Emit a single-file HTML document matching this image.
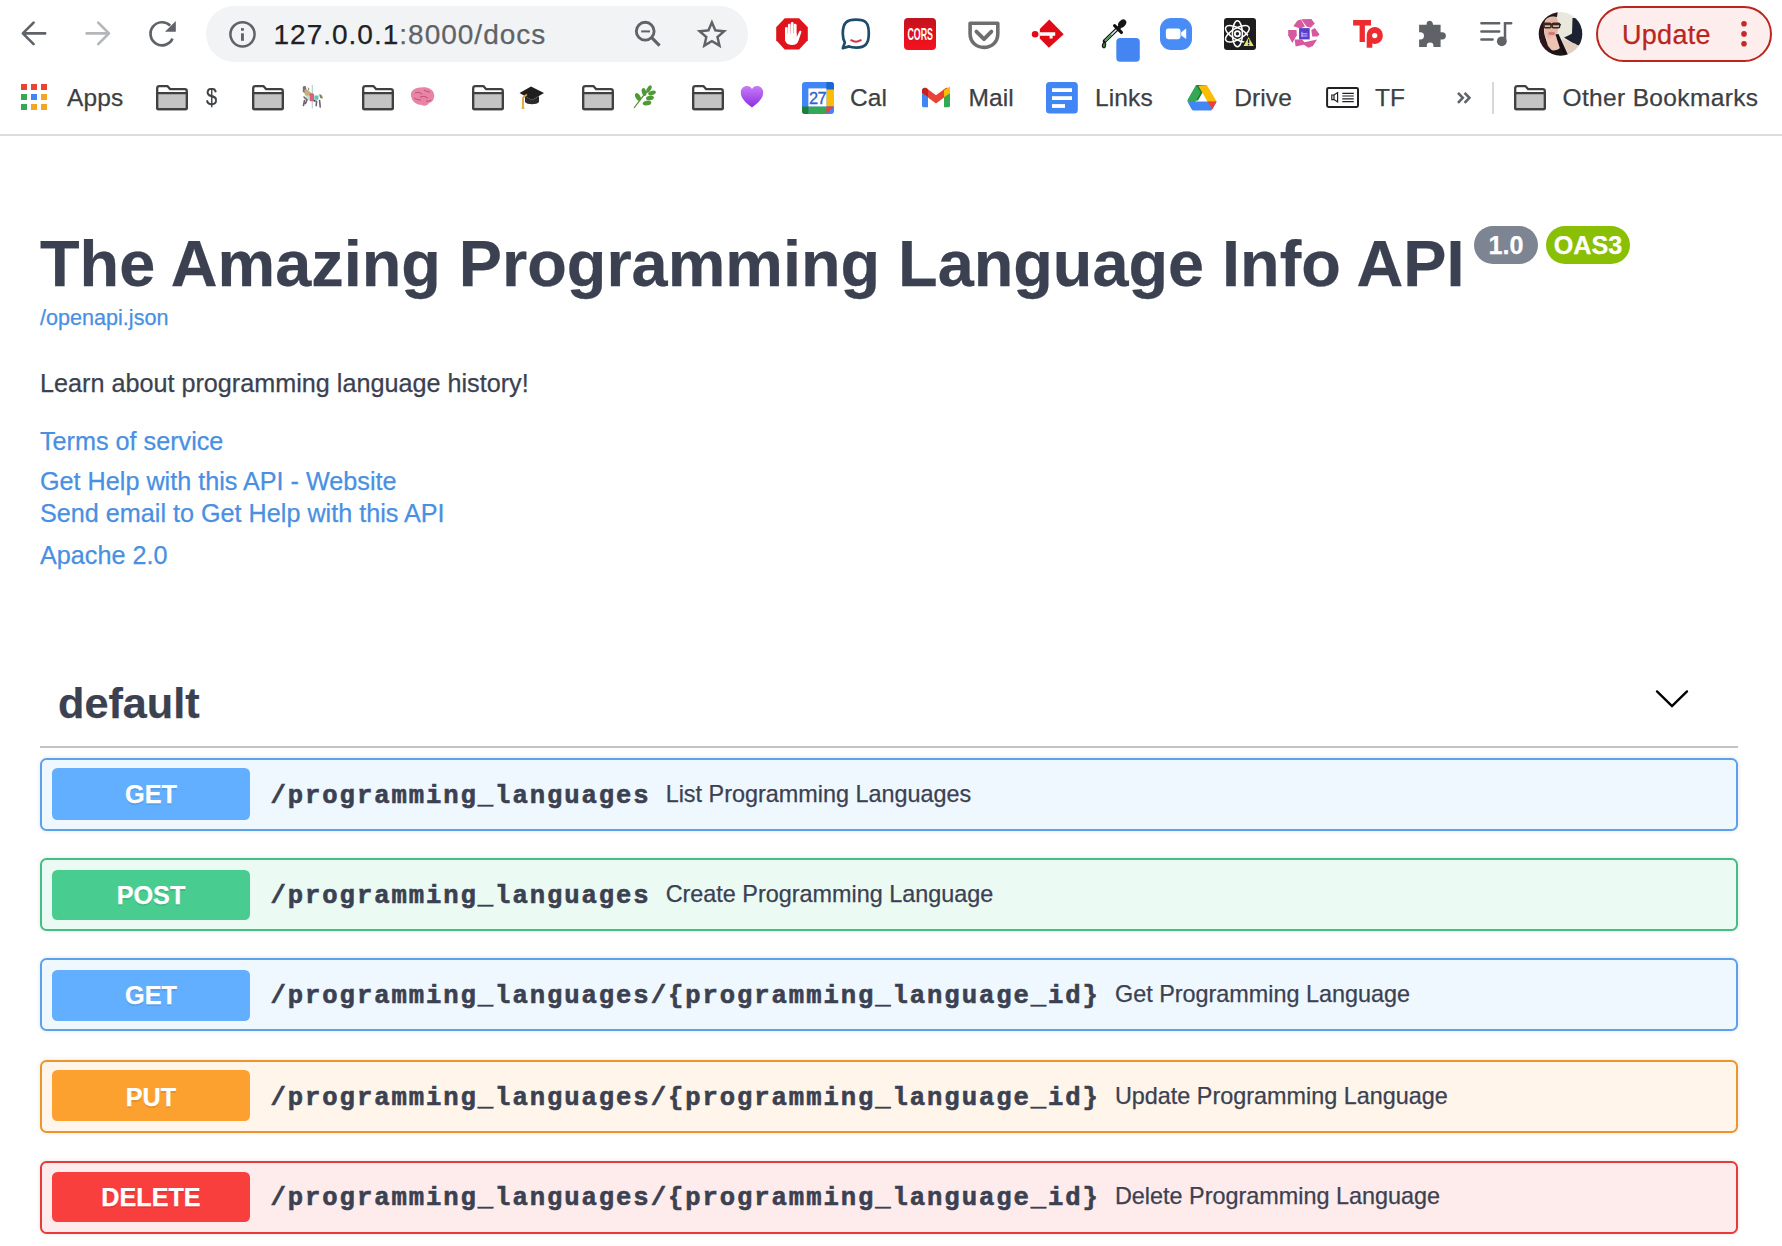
<!DOCTYPE html><html><head><meta charset="utf-8"><style>
html,body{margin:0;padding:0;background:#fff;width:1782px;height:1246px;overflow:hidden;position:relative}
.t{position:absolute;white-space:nowrap;-webkit-text-stroke:0.25px currentColor}
.i{position:absolute;overflow:visible}
.b{position:absolute;box-sizing:border-box}
</style></head><body>
<div class="b" style="left:0;top:0;width:1782px;height:134px;background:#fff"></div>
<div class="b" style="left:0;top:134px;width:1782px;height:2px;background:#dadce0"></div>
<svg class="i" style="left:0px;top:0px;" width="200" height="66" viewBox="0 0 200 66">
<g fill="none" stroke="#5f6368" stroke-width="2.6" stroke-linecap="round" stroke-linejoin="round">
<path d="M45.2 33.4H23M33.6 22.6L22.8 33.4L33.6 44.2"/></g>
<g fill="none" stroke="#b4b6b9" stroke-width="2.6" stroke-linecap="round" stroke-linejoin="round">
<path d="M86.6 33.4H108.8M98.2 22.6L109 33.4L98.2 44.2"/></g>
<g fill="none" stroke="#5f6368" stroke-width="2.7" stroke-linecap="butt">
<path d="M172.52 38.68A11.55 11.55 0 1 1 170.2 25.6"/></g>
<path fill="#5f6368" d="M175.8 20.9V31.7H165Z"/>
</svg>
<div class="b" style="left:206px;top:6px;width:542px;height:56px;border-radius:28px;background:#f1f3f4"></div>
<svg class="i" style="left:200px;top:0px;" width="80" height="66" viewBox="200 0 80 66">
<circle cx="242.5" cy="34.3" r="12.1" fill="none" stroke="#5f6368" stroke-width="2.5"/>
<rect x="241" y="33.3" width="2.9" height="7.5" fill="#5f6368"/>
<rect x="241" y="28.1" width="2.9" height="2.6" fill="#5f6368"/>
</svg>
<div class="t" style="left:273.5px;top:20.60px;font-size:28px;line-height:28px;color:#202124;font-weight:normal;font-family:'Liberation Sans', sans-serif;letter-spacing:1.0px;">127.0.0.1<span style="color:#5f6368">:8000/docs</span></div>
<svg class="i" style="left:620px;top:0px;" width="130" height="66" viewBox="620 0 130 66">
<g fill="none" stroke="#5f6368">
<circle cx="645.2" cy="31.2" r="8.9" stroke-width="2.9"/><path d="M651.4 37.4L659.6 45.6" stroke-width="3.1"/><path d="M641.2 31.4H650" stroke-width="2"/></g>
<path fill="#5f6368" transform="translate(693.6 16.15) scale(1.525)" d="M22 9.24l-7.19-.62L12 2 9.19 8.63 2 9.24l5.46 4.73L5.82 21 12 17.27 18.18 21l-1.63-7.03L22 9.24zM12 15.4l-3.76 2.27 1-4.28-3.32-2.88 4.38-.38L12 6.1l1.71 4.04 4.38.38-3.32 2.88 1 4.28L12 15.4z"/>
</svg>
<svg class="i" style="left:776px;top:18px;" width="32" height="32" viewBox="0 0 32 32">
<path fill="#e0141c" d="M8.7 0.3H23.1L31.8 9.3V22.3L23.1 31.5H8.7L0.2 22.3V9.3Z"/>
<g fill="#fff">
<rect x="9" y="9" width="2.7" height="14" rx="1.3"/>
<rect x="11.9" y="5.8" width="2.7" height="14" rx="1.3"/>
<rect x="14.8" y="4.1" width="2.8" height="14" rx="1.4"/>
<rect x="17.8" y="5.8" width="2.8" height="14" rx="1.4"/>
<path d="M9 15.5H20.6V19.6L23.2 13.6C23.8 12.4 25.6 12.6 25.4 14L22.6 22.4C21.6 25.6 19.4 27 16 27C11.4 27 9 24.6 9 20.6Z"/>
</g>
</svg>
<svg class="i" style="left:840px;top:17px;" width="34" height="34" viewBox="0 0 34 34">
<path fill="none" stroke="#1e4c6d" stroke-width="2.7" stroke-linejoin="round" d="M16 2.6C25.4 2.6 28.8 5.4 28.8 16.4C28.8 27 25 30.6 16.4 30.6C12.6 30.6 10.6 30.2 9 29.4L2.8 31.2L4.8 25.6C3.4 23 2.8 20 2.8 16.4C2.8 5.6 6.8 2.6 16 2.6Z"/>
<path fill="none" stroke="#d3344c" stroke-width="2" stroke-linecap="round" d="M11.2 23.2Q16 26.4 20.8 23.2"/>
</svg>
<div class="b" style="left:904px;top:18px;width:32px;height:31.5px;border-radius:4px;background:linear-gradient(#bf1420,#d8101c 30%,#e3101c 55%,#f5121f)"></div>
<svg class="i" style="left:904px;top:18px;" width="32" height="32" viewBox="0 0 32 32"><text x="3.4" y="21.5" font-family="Liberation Sans" font-weight="bold" font-size="16.6" fill="#fff" textLength="25.6" lengthAdjust="spacingAndGlyphs">CORS</text></svg>
<svg class="i" style="left:966px;top:19px;" width="36" height="32" viewBox="0 0 36 32">
<path fill="none" stroke="#6e6e6e" stroke-width="3.6" stroke-linejoin="round" d="M4.1 4.2H31.8V14.8C31.8 23.2 25.6 28.4 18 28.4C10.4 28.4 4.1 23.2 4.1 14.8Z"/>
<path fill="none" stroke="#6e6e6e" stroke-width="3.8" stroke-linecap="round" stroke-linejoin="round" d="M10.4 12.6L18 20.2L25.4 12.6"/>
</svg>
<svg class="i" style="left:1030px;top:17px;" width="36" height="34" viewBox="0 0 36 34">
<path fill="#e10a16" d="M19.3 2.4L33.7 17.2L18.9 30.7L9.8 21.6V12Z"/>
<circle cx="5.1" cy="17.2" r="3.3" fill="#e10a16"/>
<path fill="#fff" d="M9.8 15.3H25.2V18.8H22.6V21.6H19.6V18.8H9.8Z"/>
</svg>
<svg class="i" style="left:1096px;top:14px;" width="48" height="50" viewBox="0 0 48 50">
<path d="M8.6 27.2L21.6 14.6" stroke="#111" stroke-width="3.8" stroke-linecap="round"/>
<path d="M9 26.8L21.2 15" stroke="#dfe8df" stroke-width="1.6"/>
<path d="M9.2 26.6L15.5 20.6" stroke="#3f9a4a" stroke-width="1.6"/>
<path d="M18.6 11.6L25.4 18.4" stroke="#111" stroke-width="3.2" stroke-linecap="round"/>
<ellipse cx="26.2" cy="9.6" rx="4.6" ry="3.4" transform="rotate(-45 26.2 9.6)" fill="#161616"/>
<path d="M21.6 12.6L24.2 15.2" stroke="#161616" stroke-width="4"/>
<path d="M8 28.2C6.2 30.4 5.6 32.6 7.2 33.6C8.8 34.4 10.2 32.6 9.6 29Z" fill="#3f7a46" stroke="#111" stroke-width="1.1"/>
<rect x="20.3" y="23.9" width="23.5" height="23.9" rx="3.8" fill="#4585f2"/>
</svg>
<div class="b" style="left:1160px;top:18px;width:32px;height:32px;border-radius:11px;background:#4a8cf6"></div>
<svg class="i" style="left:1160px;top:18px;" width="32" height="32" viewBox="0 0 32 32">
<rect x="5.9" y="10.4" width="14.6" height="10.8" rx="2.4" fill="#fff"/>
<path d="M21.2 14.2L26.2 10.6V21L21.2 17.4Z" fill="#fff"/>
</svg>
<div class="b" style="left:1224px;top:18px;width:32px;height:32px;border-radius:3px;background:#1e1e1e"></div>
<svg class="i" style="left:1224px;top:18px;" width="32" height="32" viewBox="0 0 32 32">
<g fill="none" stroke="#fff" stroke-width="1.5">
<ellipse cx="13.4" cy="15.8" rx="13.3" ry="5.6" transform="rotate(-30 13.4 15.8)"/>
<ellipse cx="13.4" cy="15.8" rx="13.3" ry="5.6" transform="rotate(30 13.4 15.8)"/>
<ellipse cx="13.4" cy="15.8" rx="13" ry="5" transform="rotate(90 13.4 15.8)"/>
<circle cx="13.4" cy="15.8" r="2.6" stroke-width="1.8"/>
</g>
<path d="M24.6 17.6L31 28.8H18.2Z" fill="#e6e66e" stroke="#1e1e1e" stroke-width="1.4"/>
<rect x="23.9" y="21.2" width="1.4" height="4" fill="#1e1e1e"/><rect x="23.9" y="26" width="1.4" height="1.4" fill="#1e1e1e"/>
</svg>
<svg class="i" style="left:1284px;top:14px;" width="40" height="40" viewBox="0 0 40 40">
<g fill="#d6589f">
<path d="M9.3 12.2L13.5 6.4L17 5.6L21 12.6L16.5 14.5Z"/>
<path d="M17.2 5.2L27.3 5.1L30.8 9.6L26.6 13.8L22.5 12.5Z"/>
<path d="M27.3 16L30.8 14.1L35.6 20.5L33.4 22.5H28.2Z"/>
<path d="M4.2 16H12.5L12.8 21.2L8.3 28.9L4.2 21.2Z"/>
<path d="M10.6 25.4H18L20.5 28.2L33 25.4L28.9 32.1L24.4 33.7L19.9 30.8L11.6 32.4Z"/>
</g>
<rect x="15.1" y="14.1" width="10.6" height="11.3" fill="#5a3fca"/>
<g stroke="#c8bfff" stroke-width="1"><path d="M17.5 19.8H23.5M17.5 22H23.5M18 17.8V23"/></g>
</svg>
<svg class="i" style="left:1350px;top:17px;" width="36" height="34" viewBox="0 0 36 34">
<path fill="#ef2b30" d="M3.1 3H21V8.6H14.9V25H9.6V8.6H3.1Z"/>
<path fill="#ef2b30" d="M16.7 19C16.7 13.8 20.2 10.1 24.8 10.1C29.4 10.1 32.8 13.8 32.8 18.6C32.8 23.4 29.4 27 24.8 27C23.9 27 23.1 26.9 22.3 26.6V30.8H16.7Z"/>
<circle cx="24.7" cy="18.6" r="2.6" fill="#fff"/>
</svg>
<svg class="i" style="left:1416px;top:17px;" width="34" height="34" viewBox="0 0 34 34">
<path fill="#5f6368" d="M3.1 7.7H10.6V6.5A3.2 3.2 0 0 1 16.9 6.5V7.7H24.6V15.2H26.3A3.6 3.6 0 0 1 26.3 22.4H24.6V29.9H17.4V28.8A3.3 3.3 0 0 0 10.8 28.8V29.9H3.1V22.4H4.4A3.6 3.6 0 0 0 4.4 15.2H3.1Z"/>
</svg>
<svg class="i" style="left:1476px;top:17px;" width="40" height="34" viewBox="0 0 40 34">
<g stroke="#5f6368" stroke-width="2.5" stroke-linecap="round" fill="none">
<path d="M5.4 6.2H23.2M5.4 14.4H23.2M5.4 22.5H16.6"/>
<path d="M29 24.2V6.2H35.2"/>
</g>
<circle cx="25.8" cy="24.3" r="4.9" fill="#5f6368"/>
</svg>
<svg class="i" style="left:1536px;top:10px;" width="48" height="48" viewBox="0 0 48 48">
<defs><clipPath id="avc"><circle cx="24.5" cy="23.9" r="21.8"/></clipPath>
<filter id="avb" x="-10%" y="-10%" width="120%" height="120%"><feGaussianBlur stdDeviation="0.55"/></filter></defs>
<g clip-path="url(#avc)"><g filter="url(#avb)">
<rect width="48" height="48" fill="#e9e8dc"/>
<path d="M36.5 8C41 8 46 10 48 12V36L40 35L28 27.5C31 26 34 25 36 23.5Z" fill="#1e2430"/>
<path d="M26 29L40 34L47 41L40 48H30Z" fill="#e2cfc0"/>
<path d="M0 0H22L21 7C16 5.5 11 7 9 11C7.5 16 7.5 23 9.5 28C11 33 15 36 20 40L26 48H0Z" fill="#2a191b"/>
<path d="M9 11C11 7 17 6.5 21 7.5C22.5 13 22.5 21 20.5 26L17 29.5C12.5 30.5 10 28.5 9.2 25C8 20 8 15 9 11Z" fill="#e4b7a6"/>
<path d="M10 29.5L19.5 25.5L27 41L19 44L12 36Z" fill="#eec3b2"/>
<path d="M19.5 24.5L22.5 24L32 45L27 48Z" fill="#141113"/>
<path d="M14 40C18 41 22 40 24 38L30 46V48H12Z" fill="#1b1315"/>
<path d="M7 14.6H25" stroke="#3b2724" stroke-width="1.4"/>
<rect x="8" y="13.2" width="7" height="4.6" rx="1.2" fill="none" stroke="#3b2724" stroke-width="1.5"/>
<rect x="16.2" y="13.2" width="7.4" height="4.6" rx="1.2" fill="none" stroke="#3b2724" stroke-width="1.5"/>
<ellipse cx="15.6" cy="23.4" rx="3.4" ry="1.7" fill="#d27882"/>
</g></g>
</svg>
<div class="b" style="left:1596px;top:6px;width:176px;height:56px;border-radius:28px;border:2.2px solid #b9261f;background:#fdeeed"></div>
<div class="t" style="left:1622px;top:22.14px;font-size:27px;line-height:27px;color:#b9261f;font-weight:normal;font-family:'Liberation Sans', sans-serif;letter-spacing:0.3px;">Update</div>
<svg class="i" style="left:1736px;top:14px;" width="16" height="40" viewBox="0 0 16 40"><g fill="#c42a28"><circle cx="8" cy="9.8" r="2.8"/><circle cx="8" cy="19.9" r="2.8"/><circle cx="8" cy="29.8" r="2.8"/></g></svg>
<div class="b" style="left:21px;top:84px;width:6px;height:6px;background:#ea4335"></div>
<div class="b" style="left:31px;top:84px;width:6px;height:6px;background:#ea4335"></div>
<div class="b" style="left:41px;top:84px;width:6px;height:6px;background:#ea4335"></div>
<div class="b" style="left:21px;top:94px;width:6px;height:6px;background:#34a853"></div>
<div class="b" style="left:31px;top:94px;width:6px;height:6px;background:#4285f4"></div>
<div class="b" style="left:41px;top:94px;width:6px;height:6px;background:#f5a524"></div>
<div class="b" style="left:21px;top:104px;width:6px;height:6px;background:#34a853"></div>
<div class="b" style="left:31px;top:104px;width:6px;height:6px;background:#f5a524"></div>
<div class="b" style="left:41px;top:104px;width:6px;height:6px;background:#f5a524"></div>
<div class="t" style="left:67px;top:86.16px;font-size:24.5px;line-height:24.5px;color:#3c4043;font-weight:normal;font-family:'Liberation Sans', sans-serif;letter-spacing:0.12px;">Apps</div>
<svg class="i" style="left:156px;top:85px;" width="32" height="25" viewBox="0 0 32 25">
<path fill="#fff" stroke="#404040" stroke-width="2.3" stroke-linejoin="round" d="M1.2 3.4C1.2 2 2 1.2 3.4 1.2H11.6L14.2 4.2H28.8C30 4.2 30.8 5 30.8 6.2V22.4C30.8 23.4 30 24.2 29 24.2H3C2 24.2 1.2 23.4 1.2 22.4Z"/>
<path fill="#c4c4c4" stroke="#404040" stroke-width="2.3" d="M1.2 8.2H30.8V22.4C30.8 23.4 30 24.2 29 24.2H3C2 24.2 1.2 23.4 1.2 22.4Z"/>
</svg>
<div class="t" style="left:205.5px;top:85.46px;font-size:24.5px;line-height:24.5px;color:#3c4043;font-weight:normal;font-family:'Liberation Sans', sans-serif;letter-spacing:0px;transform:scaleX(0.82);transform-origin:0 0">$</div>
<svg class="i" style="left:252px;top:85px;" width="32" height="25" viewBox="0 0 32 25">
<path fill="#fff" stroke="#404040" stroke-width="2.3" stroke-linejoin="round" d="M1.2 3.4C1.2 2 2 1.2 3.4 1.2H11.6L14.2 4.2H28.8C30 4.2 30.8 5 30.8 6.2V22.4C30.8 23.4 30 24.2 29 24.2H3C2 24.2 1.2 23.4 1.2 22.4Z"/>
<path fill="#c4c4c4" stroke="#404040" stroke-width="2.3" d="M1.2 8.2H30.8V22.4C30.8 23.4 30 24.2 29 24.2H3C2 24.2 1.2 23.4 1.2 22.4Z"/>
</svg>
<svg class="i" style="left:298px;top:82px;" width="30" height="30" viewBox="0 0 30 30">
<defs><filter id="cb" x="-20%" y="-20%" width="140%" height="140%"><feGaussianBlur stdDeviation="0.45"/></filter></defs>
<g filter="url(#cb)">
<path d="M14.3 3V26.6" stroke="#b5d3cf" stroke-width="1.2"/>
<path d="M4.8 4.5L7.5 3.8L8.5 7.5L7 11L4.8 10Z" fill="#7a6e80"/>
<path d="M9.6 5L11.5 7L10.5 9Z" fill="#8a8a70"/>
<path d="M6.5 7.5C9 7 12 9 13.5 11.5L12 14L8 14.5L6.5 12Z" fill="#c9ad7e"/>
<path d="M8.2 13.5H11.4V17.8H8.2Z" fill="#b9e6c6"/>
<path d="M11.6 11.8C13 11.2 15 11.2 16 12V19.3H11.6Z" fill="#d9627a"/>
<path d="M16.4 13.5H20.4V17.8H16.4Z" fill="#62c3b4"/>
<path d="M21.2 12.2C23 12 25 13.5 24.6 16.8L22 16Z" fill="#8a8456"/>
<path d="M15.9 17.8L17.8 18.4L17.6 19.8L15.9 19.5Z" fill="#223a33"/>
<path d="M6 15L9 18L7.5 21.5M6.5 18.5L5.5 23.5" stroke="#6e6070" stroke-width="1.6" fill="none" stroke-linecap="round"/>
<path d="M18.6 19.4L18.2 23.6M21.6 18.5L22.2 25" stroke="#6e6070" stroke-width="1.6" fill="none" stroke-linecap="round"/>
</g>
</svg>
<svg class="i" style="left:362px;top:85px;" width="32" height="25" viewBox="0 0 32 25">
<path fill="#fff" stroke="#404040" stroke-width="2.3" stroke-linejoin="round" d="M1.2 3.4C1.2 2 2 1.2 3.4 1.2H11.6L14.2 4.2H28.8C30 4.2 30.8 5 30.8 6.2V22.4C30.8 23.4 30 24.2 29 24.2H3C2 24.2 1.2 23.4 1.2 22.4Z"/>
<path fill="#c4c4c4" stroke="#404040" stroke-width="2.3" d="M1.2 8.2H30.8V22.4C30.8 23.4 30 24.2 29 24.2H3C2 24.2 1.2 23.4 1.2 22.4Z"/>
</svg>
<svg class="i" style="left:408px;top:86px;" width="28" height="22" viewBox="0 0 28 22">
<path d="M3 10C2 5 7 1 13 1.5C19 0.5 25 3 26 8C27 12 25 16 21 17C20 19 17 21 14 19C9 19 4 16 3 10Z" fill="#e884a4"/>
<path d="M7 7Q11 5 14 8M12 11Q16 9 20 12M6 12Q9 14 13 14M16 4Q19 6 22 6M18 15Q20 16 23 14" stroke="#c0507a" stroke-width="1" fill="none"/>
</svg>
<svg class="i" style="left:472px;top:85px;" width="32" height="25" viewBox="0 0 32 25">
<path fill="#fff" stroke="#404040" stroke-width="2.3" stroke-linejoin="round" d="M1.2 3.4C1.2 2 2 1.2 3.4 1.2H11.6L14.2 4.2H28.8C30 4.2 30.8 5 30.8 6.2V22.4C30.8 23.4 30 24.2 29 24.2H3C2 24.2 1.2 23.4 1.2 22.4Z"/>
<path fill="#c4c4c4" stroke="#404040" stroke-width="2.3" d="M1.2 8.2H30.8V22.4C30.8 23.4 30 24.2 29 24.2H3C2 24.2 1.2 23.4 1.2 22.4Z"/>
</svg>
<svg class="i" style="left:518px;top:84px;" width="28" height="28" viewBox="0 0 28 28">
<path d="M1.5 9L13 2.5L26 9L14 16Z" fill="#1f1f1f"/>
<path d="M7 12V18C9 21 19 21 21 18V12L14 16Z" fill="#2b2b2b"/>
<path d="M9 10.5Q6 12 5 14V24" stroke="#d9a53a" stroke-width="1.8" fill="none"/>
<path d="M4 21L6 21L6.5 25L3.5 25Z" fill="#e3b548"/>
</svg>
<svg class="i" style="left:582px;top:85px;" width="32" height="25" viewBox="0 0 32 25">
<path fill="#fff" stroke="#404040" stroke-width="2.3" stroke-linejoin="round" d="M1.2 3.4C1.2 2 2 1.2 3.4 1.2H11.6L14.2 4.2H28.8C30 4.2 30.8 5 30.8 6.2V22.4C30.8 23.4 30 24.2 29 24.2H3C2 24.2 1.2 23.4 1.2 22.4Z"/>
<path fill="#c4c4c4" stroke="#404040" stroke-width="2.3" d="M1.2 8.2H30.8V22.4C30.8 23.4 30 24.2 29 24.2H3C2 24.2 1.2 23.4 1.2 22.4Z"/>
</svg>
<svg class="i" style="left:628px;top:84px;" width="28" height="26" viewBox="0 0 28 26">
<path d="M6 24Q13 14 23 3" stroke="#5e8a3a" stroke-width="1.2" fill="none"/>
<g fill="#4e9a36">
<ellipse cx="21" cy="5" rx="2" ry="4" transform="rotate(30 21 5)"/>
<ellipse cx="24" cy="9" rx="4" ry="2" transform="rotate(-20 24 9)"/>
<ellipse cx="16" cy="8" rx="2.2" ry="4" transform="rotate(-15 16 8)"/>
<ellipse cx="22" cy="14" rx="4" ry="2.2" transform="rotate(-10 22 14)"/>
<ellipse cx="10" cy="13" rx="2.4" ry="4.2" transform="rotate(-30 10 13)"/>
<ellipse cx="19" cy="19" rx="4.4" ry="2.4" transform="rotate(-10 19 19)"/>
</g></svg>
<svg class="i" style="left:692px;top:85px;" width="32" height="25" viewBox="0 0 32 25">
<path fill="#fff" stroke="#404040" stroke-width="2.3" stroke-linejoin="round" d="M1.2 3.4C1.2 2 2 1.2 3.4 1.2H11.6L14.2 4.2H28.8C30 4.2 30.8 5 30.8 6.2V22.4C30.8 23.4 30 24.2 29 24.2H3C2 24.2 1.2 23.4 1.2 22.4Z"/>
<path fill="#c4c4c4" stroke="#404040" stroke-width="2.3" d="M1.2 8.2H30.8V22.4C30.8 23.4 30 24.2 29 24.2H3C2 24.2 1.2 23.4 1.2 22.4Z"/>
</svg>
<svg class="i" style="left:739px;top:84px;" width="26" height="26" viewBox="0 0 26 26">
<defs><linearGradient id="hg" x1="0" y1="0" x2="0" y2="1"><stop offset="0" stop-color="#c77df5"/><stop offset="1" stop-color="#8e2de2"/></linearGradient></defs>
<path d="M13 23.5C6 18 1.8 14 1.8 8.4C1.8 4.6 4.6 2 8 2C10.4 2 12 3.3 13 5C14 3.3 15.6 2 18 2C21.4 2 24.2 4.6 24.2 8.4C24.2 14 20 18 13 23.5Z" fill="url(#hg)"/>
</svg>
<svg class="i" style="left:802px;top:82px;" width="32" height="32" viewBox="0 0 32 32">
<rect x="0" y="0" width="32" height="32" rx="3" fill="#4285f4"/>
<path d="M24.4 0H29C30.7 0 32 1.3 32 3V7.6H24.4Z" fill="#1967d2"/>
<rect x="24.4" y="7.6" width="7.6" height="16.8" fill="#fbbc04"/>
<path d="M6.4 24.4H24.4V32H6.4Z" fill="#34a853"/>
<path d="M0 24.4H6.4V32H3C1.3 32 0 30.7 0 29Z" fill="#188038"/>
<path d="M24.4 24.4H32L24.4 32Z" fill="#ea4335"/>
<rect x="6.4" y="6.4" width="18" height="18" fill="#fff"/>
<text x="15.6" y="21.9" text-anchor="middle" font-family="Liberation Sans" font-size="16.4" fill="#2d62d0" letter-spacing="-0.6" stroke="#2d62d0" stroke-width="0.3">27</text>
</svg>
<div class="t" style="left:850px;top:86.16px;font-size:24.5px;line-height:24.5px;color:#3c4043;font-weight:normal;font-family:'Liberation Sans', sans-serif;letter-spacing:0.12px;">Cal</div>
<svg class="i" style="left:921px;top:86px;" width="30" height="22" viewBox="0 0 30 22">
<path d="M1 4.6C1 2 4 0.8 6 2.4L15 9.2L24 2.4C26 0.8 29 2 29 4.6V7L15 17.4L1 7Z" fill="#ea4335"/>
<path d="M1 7V19.8C1 20.6 1.6 21.2 2.4 21.2H7V11Z" fill="#4285f4"/>
<path d="M29 7V19.8C29 20.6 28.4 21.2 27.6 21.2H23V11Z" fill="#34a853"/>
<path d="M23 4.3L29 0.5V7L23 11.3Z" fill="#fbbc04"/>
<path d="M1 4.6C1 2 4 0.8 6 2.4L7 3.2V11L1 7Z" fill="#c5221f"/>
</svg>
<div class="t" style="left:968.5px;top:86.16px;font-size:24.5px;line-height:24.5px;color:#3c4043;font-weight:normal;font-family:'Liberation Sans', sans-serif;letter-spacing:0.12px;">Mail</div>
<svg class="i" style="left:1046px;top:82px;" width="32" height="32" viewBox="0 0 32 32">
<rect x="0" y="0" width="31.8" height="31.6" rx="3.6" fill="#4285f4"/>
<rect x="6" y="6.2" width="20" height="3.8" fill="#fff"/>
<rect x="6" y="14.2" width="20" height="3.8" fill="#fff"/>
<rect x="6" y="22.1" width="13" height="3.8" fill="#fff"/>
</svg>
<div class="t" style="left:1095px;top:86.16px;font-size:24.5px;line-height:24.5px;color:#3c4043;font-weight:normal;font-family:'Liberation Sans', sans-serif;letter-spacing:0.12px;">Links</div>
<svg class="i" style="left:1186px;top:84px;" width="32" height="28" viewBox="0 0 32 28">
<path d="M10.2 1H20.8L12 16.6H1.4Z" fill="#188038"/>
<path d="M10.2 1L1.4 16.6L5.6 24.4L14.6 8.6Z" fill="#34a853"/>
<path d="M20.8 1L30.6 17.6H21.4L12.4 1.8Z" fill="#fbbc04"/>
<path d="M1.4 17.6H30.6L26.2 25.4C25.8 26 25.2 26.4 24.4 26.4H7.6C6.8 26.4 6.2 26 5.8 25.4Z" fill="#4285f4"/>
<path d="M21.4 17.6H30.6L26.4 25.2L21.4 17.6Z" fill="#ea4335"/>
</svg>
<div class="t" style="left:1234.2px;top:86.16px;font-size:24.5px;line-height:24.5px;color:#3c4043;font-weight:normal;font-family:'Liberation Sans', sans-serif;letter-spacing:0.12px;">Drive</div>
<svg class="i" style="left:1325px;top:86px;" width="35" height="24" viewBox="0 0 35 24">
<rect x="2.1" y="1.9" width="30.9" height="19" rx="1.4" fill="none" stroke="#202124" stroke-width="2"/>
<path d="M6.8 9H9V13.6H6.8Z M9 9L12.6 6.6V16L9 13.6" fill="none" stroke="#202124" stroke-width="1.2"/>
<path d="M17.3 7.3H28.8M17.3 10H28.8M17.3 12.8H28.8M17.3 15.6H28.8" stroke="#202124" stroke-width="1.2"/>
</svg>
<div class="t" style="left:1375px;top:86.16px;font-size:24.5px;line-height:24.5px;color:#3c4043;font-weight:normal;font-family:'Liberation Sans', sans-serif;letter-spacing:0.12px;">TF</div>
<svg class="i" style="left:1455px;top:90px;" width="18" height="16" viewBox="0 0 18 16"><g fill="none" stroke="#5f6368" stroke-width="2.6" stroke-linejoin="miter"><path d="M3 2.8L7.8 7.8L3 12.8M9.6 2.8L14.4 7.8L9.6 12.8"/></g></svg>
<div class="b" style="left:1492px;top:82px;width:2px;height:32px;background:#d6d8db"></div>
<svg class="i" style="left:1514px;top:85px;" width="32" height="25" viewBox="0 0 32 25">
<path fill="#fff" stroke="#404040" stroke-width="2.3" stroke-linejoin="round" d="M1.2 3.4C1.2 2 2 1.2 3.4 1.2H11.6L14.2 4.2H28.8C30 4.2 30.8 5 30.8 6.2V22.4C30.8 23.4 30 24.2 29 24.2H3C2 24.2 1.2 23.4 1.2 22.4Z"/>
<path fill="#c4c4c4" stroke="#404040" stroke-width="2.3" d="M1.2 8.2H30.8V22.4C30.8 23.4 30 24.2 29 24.2H3C2 24.2 1.2 23.4 1.2 22.4Z"/>
</svg>
<div class="t" style="left:1562.5px;top:86.16px;font-size:24.5px;line-height:24.5px;color:#3c4043;font-weight:normal;font-family:'Liberation Sans', sans-serif;letter-spacing:0.35px;">Other Bookmarks</div>
<div class="t" style="left:40px;top:232.15px;font-size:64.8px;line-height:64.8px;color:#3b4151;font-weight:bold;font-family:'Liberation Sans', sans-serif;letter-spacing:0px;">The Amazing Programming Language Info API</div>
<div class="b" style="left:1474px;top:226px;width:64px;height:37.5px;border-radius:19px;background:#7d8492"></div>
<div class="t" style="left:1474px;top:232.67px;font-size:25.2px;line-height:25.2px;color:#fff;font-weight:bold;font-family:'Liberation Sans', sans-serif;letter-spacing:0px;width:64px;text-align:center">1.0</div>
<div class="b" style="left:1546px;top:226px;width:84px;height:37.5px;border-radius:19px;background:#89bf04"></div>
<div class="t" style="left:1546px;top:232.67px;font-size:25.2px;line-height:25.2px;color:#fff;font-weight:bold;font-family:'Liberation Sans', sans-serif;letter-spacing:0px;width:84px;text-align:center">OAS3</div>
<div class="t" style="left:40px;top:307.22px;font-size:21.6px;line-height:21.6px;color:#4990e2;font-weight:normal;font-family:'Liberation Sans', sans-serif;letter-spacing:0px;">/openapi.json</div>
<div class="t" style="left:40px;top:370.67px;font-size:25.2px;line-height:25.2px;color:#3b4151;font-weight:normal;font-family:'Liberation Sans', sans-serif;letter-spacing:0px;">Learn about programming language history!</div>
<div class="t" style="left:40px;top:428.97px;font-size:25.2px;line-height:25.2px;color:#4990e2;font-weight:normal;font-family:'Liberation Sans', sans-serif;letter-spacing:0px;">Terms of service</div>
<div class="t" style="left:40px;top:469.27px;font-size:25.2px;line-height:25.2px;color:#4990e2;font-weight:normal;font-family:'Liberation Sans', sans-serif;letter-spacing:0px;">Get Help with this API - Website</div>
<div class="t" style="left:40px;top:501.07px;font-size:25.2px;line-height:25.2px;color:#4990e2;font-weight:normal;font-family:'Liberation Sans', sans-serif;letter-spacing:0px;">Send email to Get Help with this API</div>
<div class="t" style="left:40px;top:542.97px;font-size:25.2px;line-height:25.2px;color:#4990e2;font-weight:normal;font-family:'Liberation Sans', sans-serif;letter-spacing:0px;">Apache 2.0</div>
<div class="t" style="left:58px;top:681.63px;font-size:43.2px;line-height:43.2px;color:#3b4151;font-weight:bold;font-family:'Liberation Sans', sans-serif;letter-spacing:0px;">default</div>
<svg class="i" style="left:1650px;top:684px;" width="44" height="30" viewBox="0 0 44 30"><path d="M7 7.4L22 22.1L37 7.4" fill="none" stroke="#000" stroke-width="2.4" stroke-linecap="round" stroke-linejoin="miter"/></svg>
<div class="b" style="left:40px;top:746px;width:1698px;height:2px;background:#c2c3c6"></div>
<div class="b" style="left:40px;top:758.2px;width:1698px;height:73.2px;border:2px solid color-mix(in srgb, #61affe 93%, #000);border-radius:6.5px;background:#fff;box-shadow:0 0 4px rgba(0,0,0,.12)"><div style="position:absolute;inset:0;background:rgba(97,175,254,.1);border-radius:4.5px"></div></div>
<div class="b" style="left:52px;top:768.1px;width:198px;height:51.6px;border-radius:5.4px;background:#61affe"></div>
<div class="t" style="left:52px;top:782.47px;font-size:25.2px;line-height:25.2px;color:#fff;font-weight:bold;font-family:'Liberation Sans', sans-serif;letter-spacing:0px;width:198px;text-align:center;text-shadow:0 1.8px 0 rgba(0,0,0,.1)">GET</div>
<div class="t" style="left:270.5px;top:783.58px;font-size:25.6px;line-height:25.6px;color:#3b4151;font-weight:bold;font-family:'Liberation Mono', monospace;letter-spacing:1.92px;-webkit-text-stroke:0.6px #3b4151">/programming_languages</div>
<div class="t" style="left:665.6600000000001px;top:782.79px;font-size:23.4px;line-height:23.4px;color:#3b4151;font-weight:normal;font-family:'Liberation Sans', sans-serif;letter-spacing:0px;">List Programming Languages</div>
<div class="b" style="left:40px;top:858.3px;width:1698px;height:73.2px;border:2px solid color-mix(in srgb, #49cc90 93%, #000);border-radius:6.5px;background:#fff;box-shadow:0 0 4px rgba(0,0,0,.12)"><div style="position:absolute;inset:0;background:rgba(73,204,144,.1);border-radius:4.5px"></div></div>
<div class="b" style="left:52px;top:870.0px;width:198px;height:49.8px;border-radius:5.4px;background:#49cc90"></div>
<div class="t" style="left:52px;top:882.57px;font-size:25.2px;line-height:25.2px;color:#fff;font-weight:bold;font-family:'Liberation Sans', sans-serif;letter-spacing:0px;width:198px;text-align:center;text-shadow:0 1.8px 0 rgba(0,0,0,.1)">POST</div>
<div class="t" style="left:270.5px;top:883.68px;font-size:25.6px;line-height:25.6px;color:#3b4151;font-weight:bold;font-family:'Liberation Mono', monospace;letter-spacing:1.92px;-webkit-text-stroke:0.6px #3b4151">/programming_languages</div>
<div class="t" style="left:665.6600000000001px;top:882.89px;font-size:23.4px;line-height:23.4px;color:#3b4151;font-weight:normal;font-family:'Liberation Sans', sans-serif;letter-spacing:0px;">Create Programming Language</div>
<div class="b" style="left:40px;top:958.3px;width:1698px;height:73.2px;border:2px solid color-mix(in srgb, #61affe 93%, #000);border-radius:6.5px;background:#fff;box-shadow:0 0 4px rgba(0,0,0,.12)"><div style="position:absolute;inset:0;background:rgba(97,175,254,.1);border-radius:4.5px"></div></div>
<div class="b" style="left:52px;top:969.9px;width:198px;height:51.6px;border-radius:5.4px;background:#61affe"></div>
<div class="t" style="left:52px;top:982.57px;font-size:25.2px;line-height:25.2px;color:#fff;font-weight:bold;font-family:'Liberation Sans', sans-serif;letter-spacing:0px;width:198px;text-align:center;text-shadow:0 1.8px 0 rgba(0,0,0,.1)">GET</div>
<div class="t" style="left:270.5px;top:983.68px;font-size:25.6px;line-height:25.6px;color:#3b4151;font-weight:bold;font-family:'Liberation Mono', monospace;letter-spacing:1.92px;-webkit-text-stroke:0.6px #3b4151">/programming_languages/{programming_language_id}</div>
<div class="t" style="left:1114.94px;top:982.89px;font-size:23.4px;line-height:23.4px;color:#3b4151;font-weight:normal;font-family:'Liberation Sans', sans-serif;letter-spacing:0px;">Get Programming Language</div>
<div class="b" style="left:40px;top:1060.3px;width:1698px;height:73.2px;border:2px solid color-mix(in srgb, #fca130 93%, #000);border-radius:6.5px;background:#fff;box-shadow:0 0 4px rgba(0,0,0,.12)"><div style="position:absolute;inset:0;background:rgba(252,161,48,.1);border-radius:4.5px"></div></div>
<div class="b" style="left:52px;top:1070.2px;width:198px;height:51.3px;border-radius:5.4px;background:#fca130"></div>
<div class="t" style="left:52px;top:1084.57px;font-size:25.2px;line-height:25.2px;color:#fff;font-weight:bold;font-family:'Liberation Sans', sans-serif;letter-spacing:0px;width:198px;text-align:center;text-shadow:0 1.8px 0 rgba(0,0,0,.1)">PUT</div>
<div class="t" style="left:270.5px;top:1085.68px;font-size:25.6px;line-height:25.6px;color:#3b4151;font-weight:bold;font-family:'Liberation Mono', monospace;letter-spacing:1.92px;-webkit-text-stroke:0.6px #3b4151">/programming_languages/{programming_language_id}</div>
<div class="t" style="left:1114.94px;top:1084.89px;font-size:23.4px;line-height:23.4px;color:#3b4151;font-weight:normal;font-family:'Liberation Sans', sans-serif;letter-spacing:0px;">Update Programming Language</div>
<div class="b" style="left:40px;top:1160.5px;width:1698px;height:73.2px;border:2px solid color-mix(in srgb, #f93e3e 93%, #000);border-radius:6.5px;background:#fff;box-shadow:0 0 4px rgba(0,0,0,.12)"><div style="position:absolute;inset:0;background:rgba(249,62,62,.1);border-radius:4.5px"></div></div>
<div class="b" style="left:52px;top:1171.8px;width:198px;height:49.8px;border-radius:5.4px;background:#f93e3e"></div>
<div class="t" style="left:52px;top:1184.77px;font-size:25.2px;line-height:25.2px;color:#fff;font-weight:bold;font-family:'Liberation Sans', sans-serif;letter-spacing:0px;width:198px;text-align:center;text-shadow:0 1.8px 0 rgba(0,0,0,.1)">DELETE</div>
<div class="t" style="left:270.5px;top:1185.88px;font-size:25.6px;line-height:25.6px;color:#3b4151;font-weight:bold;font-family:'Liberation Mono', monospace;letter-spacing:1.92px;-webkit-text-stroke:0.6px #3b4151">/programming_languages/{programming_language_id}</div>
<div class="t" style="left:1114.94px;top:1185.09px;font-size:23.4px;line-height:23.4px;color:#3b4151;font-weight:normal;font-family:'Liberation Sans', sans-serif;letter-spacing:0px;">Delete Programming Language</div>
</body></html>
